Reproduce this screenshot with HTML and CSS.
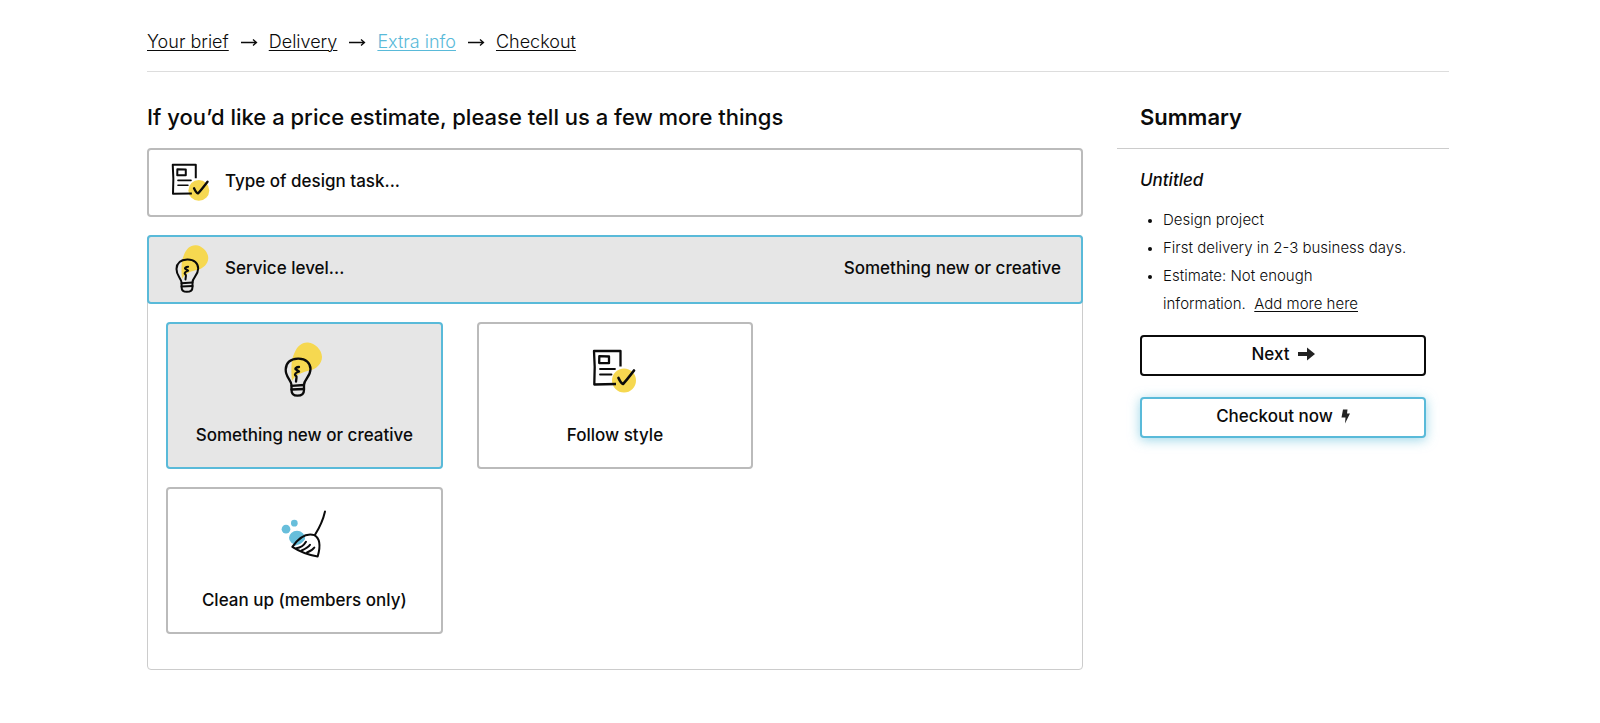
FILE: index.html
```html
<!DOCTYPE html>
<html lang="en">
<head>
<meta charset="utf-8">
<meta name="viewport" content="width=device-width, initial-scale=1">
<title>Extra info</title>
<link rel="stylesheet" href="styles.css">
</head>
<body>
<svg class="sprite" aria-hidden="true">
  <symbol id="doc" viewBox="0 0 46 46">
    <circle cx="32" cy="31.5" r="12" fill="#f6d850"/>
    <g fill="none" stroke="#0b0b0b" stroke-width="2.300" stroke-linecap="round" stroke-linejoin="round">
      <path d="M28.500 17.500V2H2L2.700 18 2.300 35.500 24 35" stroke-linecap="butt"/>
      <path d="M7.300 7.200 17 7.500V14.200L7.200 14Z"/>
      <path d="M8 20H23M8 25.500H19.500" stroke-width="1.800"/>
      <path d="M26.500 29Q29 34.500 31 35 34 32 42 21.500" stroke-width="2.700"/>
    </g>
  </symbol>
  <symbol id="bulb" viewBox="0 0 40 56">
    <path d="M8 40C7 30 7 19 10 13 13 5 18 1 24 1.500 31 2 38 9 38 16 38 23 32 28 26 29.500 19 31 12 33 8 40Z" fill="#f6d850"/>
    <g fill="none" stroke="#0b0b0b" stroke-width="2.300" stroke-linecap="round" stroke-linejoin="round">
      <path d="M7.500 44C7 39 1.500 36 1.700 28.500 2 21 7 18 14 17.700 22 17.500 26.500 22 26.500 28 26.500 36 20 38 20 44V49C20 53 17 54.700 13.500 54.700S7.500 53 7.500 49Z"/>
      <path d="M7.500 44.800 20 44M7.500 48.500 20 48"/>
      <path d="M15 26C12 26 10.500 28 12 28.500L15 30.500C13 31.500 11 32 11 33.500 11 35 13 34.500 12.500 36.500L12 40.500"/>
    </g>
  </symbol>
  <symbol id="broom" viewBox="30 33 138 143">
    <g fill="#67bedb"><circle cx="45" cy="90" r="13"/><circle cx="70" cy="72" r="10"/><ellipse cx="78" cy="116" rx="24" ry="21"/></g>
    <path d="M64 143C84 118 103 100 130 108 151 120 148 145 140 172Z" fill="#fff"/>
    <path d="M64 143C75 137 92 137 102 120V106C86 112 75 126 64 143Z" fill="#67bedb"/>
    <g fill="none" stroke="#0b0b0b" stroke-width="6" stroke-linecap="round" stroke-linejoin="round">
      <path d="M162 37C158 55 152 75 132 107"/>
      <path d="M64 143C84 115 104 100 130 108 151 120 148 145 140 172 112 167 87 158 64 143Z"/>
      <path d="M76 147C88 146 98 140 105 128M92 154C104 149 113 144 117 137M108 160C118 156 126 151 130 145"/>
    </g>
  </symbol>
</svg>
<div class="page">
  <nav class="steps" aria-label="Progress">
    <a href="#">Your brief</a>
    <svg class="step-arrow" viewBox="0 0 18 10" aria-hidden="true"><path d="M1 5.500H16M13 2.500 16.500 5.500 13 8.500"/></svg>
    <a href="#">Delivery</a>
    <svg class="step-arrow" viewBox="0 0 18 10" aria-hidden="true"><path d="M1 5.500H16M13 2.500 16.500 5.500 13 8.500"/></svg>
    <a href="#" class="current" aria-current="step">Extra info</a>
    <svg class="step-arrow" viewBox="0 0 18 10" aria-hidden="true"><path d="M1 5.500H16M13 2.500 16.500 5.500 13 8.500"/></svg>
    <a href="#">Checkout</a>
  </nav>
  <div class="layout">
    <main class="main">
      <h1 class="title">If you’d like a price estimate, please tell us a few more things</h1>
      <button type="button" class="bar">
        <span class="bar-icon"><svg class="doc-small" aria-hidden="true"><use href="#doc"/></svg></span>
        <span>Type of design task...</span>
      </button>
      <section class="group">
        <button type="button" class="bar bar-open" aria-expanded="true">
          <span class="bar-icon"><svg class="bulb-small" aria-hidden="true"><use href="#bulb"/></svg></span>
          <span>Service level...</span>
          <span class="bar-value">Something new or creative</span>
        </button>
        <div class="options">
          <button type="button" class="option selected" aria-pressed="true">
            <span class="option-icon"><svg class="bulb" aria-hidden="true"><use href="#bulb"/></svg></span>
            <span>Something new or creative</span>
          </button>
          <button type="button" class="option">
            <span class="option-icon"><svg class="doc" aria-hidden="true"><use href="#doc"/></svg></span>
            <span>Follow style</span>
          </button>
          <button type="button" class="option members">
            <span class="option-icon"><svg class="broom" aria-hidden="true"><use href="#broom"/></svg></span>
            <span>Clean up (members only)</span>
          </button>
        </div>
      </section>
    </main>
    <aside class="summary">
      <h2 class="title summary-title">Summary</h2>
      <div class="summary-body">
        <h3 class="project">Untitled</h3>
        <ul class="facts">
          <li>Design project</li>
          <li>First delivery in 2-3 business days.</li>
          <li>Estimate: Not enough<br>information.&nbsp; <a href="#">Add more here</a></li>
        </ul>
        <button type="button" class="action">Next
          <svg class="next-arrow" viewBox="0 0 17 14" aria-hidden="true"><path d="M0 5H9V0.500L17 7 9 13.500V9H0Z"/></svg>
        </button>
        <button type="button" class="action action-now">Checkout now
          <svg class="bolt" viewBox="0 0 9 15" aria-hidden="true"><path d="M2 0.500H6.500L6 4.500H9L4 14.500 4.500 8.500H0.500Z"/></svg>
        </button>
      </div>
    </aside>
  </div>
</div>
</body>
</html>
```
FILE: styles.css
```css
* { box-sizing: border-box; }
body {
  margin: 0;
  background: #fff;
  color: #0b0b0b;
  font-family: Inter, "Liberation Sans", sans-serif;
  font-size: 17px;
  line-height: 24px;
}
button {
  font: inherit;
  font-weight: 500;
  color: inherit;
  background: #fff;
  cursor: pointer;
}
a { color: inherit; text-underline-offset: 2px; text-decoration-thickness: 1px; }
svg { display: block; flex: none; }
.sprite { position: absolute; width: 0; height: 0; }
.page { max-width: 1350px; margin: 0 auto; padding: 30px 26px 50px 22px; }
.steps {
  display: flex;
  align-items: center;
  gap: 11px;
  padding-bottom: 17px;
  border-bottom: 1px solid #ddd;
  font-size: 18px;
  font-weight: 300;
}
.current { color: #59bad9; }
.step-arrow { width: 18px; height: 10px; fill: none; stroke: #0b0b0b; stroke-width: 1.3; }
.layout { display: flex; align-items: flex-start; gap: 34px; padding-top: 29px; }
.main { flex: 1; min-width: 0; }
.title { margin: 0; font-size: 22px; line-height: 32px; font-weight: 600; }
.main .title { font-weight: 500; }
.bar {
  display: flex;
  align-items: center;
  width: 100%;
  height: 69px;
  margin-top: 15px;
  padding: 0 20px 3px;
  border: 2px solid #bbb;
  border-radius: 4px;
  text-align: left;
}
.bar-icon { width: 56px; padding-left: 2px; }
.doc-small { width: 40px; height: 40px; margin-top: 3px; }
.bulb-small { width: 35px; height: 49px; margin-left: 4px; }
.bar-value { margin-left: auto; }
.group { margin-top: 18px; border: 1px solid #ccc; border-radius: 4px; }
.group .bar { width: calc(100% + 2px); margin: -1px -1px 0; }
.bar-open, .selected { background: #e6e6e6; border-color: #59bad9; }
.options {
  display: grid;
  grid-template-columns: repeat(3, 1fr);
  gap: 18px 34px;
  padding: 18px 18px 35px;
}
.option {
  display: flex;
  flex-direction: column;
  align-items: center;
  gap: 24px;
  padding: 15px 8px 20px;
  border: 2px solid #bbb;
  border-radius: 4px;
}
.option.selected { border-color: #59bad9; }
.option.members { grid-column: 1; }
.option-icon { display: flex; align-items: center; height: 60px; }
.bulb { width: 40px; height: 56px; }
.doc { width: 46px; height: 46px; margin-top: 6px; }
.broom { width: 46px; height: 48px; }
.summary { width: 332px; }
.summary-title { padding: 0 23px 15px; border-bottom: 1px solid #ccc; }
.summary-body { padding: 19px 23px; }
.project { margin: 0; font-size: 17px; font-weight: 500; font-style: italic; }
.facts { margin: 14px 0 17px; padding-left: 23px; font-size: 15px; line-height: 28px; font-weight: 300; }
.facts li::marker { font-size: 12px; }
.action {
  display: flex;
  justify-content: center;
  align-items: center;
  gap: 8px;
  width: 100%;
  height: 41px;
  padding: 0 0 3px;
  border: 2px solid #0b0b0b;
  border-radius: 4px;
}
.action-now { margin-top: 21px; border-color: #59bad9; box-shadow: 0 2px 12px #59bad999; }
.next-arrow { width: 17px; height: 14px; fill: #222; }
.bolt { width: 9px; height: 15px; fill: #222; }
```
